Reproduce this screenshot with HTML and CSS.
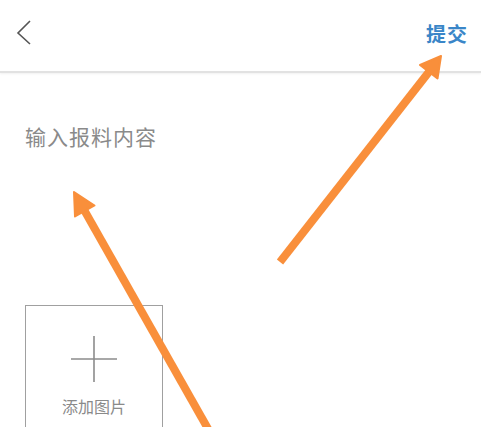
FILE: index.html
```html
<!DOCTYPE html>
<html lang="zh-CN">
<head>
<meta charset="utf-8">
<title>报料</title>
<link rel="stylesheet" href="styles.css">
</head>
<body>
<div class="page">
  <header class="topbar">
    <button class="back" aria-label="返回">
      <svg width="16" height="26" viewBox="0 0 16 26"><polyline points="14,1 2,13 14,24" fill="none" stroke="#555" stroke-width="1.6"/></svg>
    </button>
    <button class="submit">提交</button>
  </header>
  <main class="content">
    <div class="input-area">输入报料内容</div>
    <div class="upload">
      <svg class="plus" width="46" height="46" viewBox="0 0 46 46"><path d="M23 0V46M0 23H46" stroke="#8c8c8c" stroke-width="1.6" fill="none"/></svg>
      <span class="upload-label">添加图片</span>
    </div>
  </main>
  <svg class="annot" width="481" height="427" viewBox="0 0 481 427">
    <line x1="280" y1="262" x2="432" y2="68" stroke="#f98f3b" stroke-width="8"/>
    <polygon points="441,56 420,65 437.5,78.5" fill="#f98f3b" stroke="#f98f3b" stroke-width="2" stroke-linejoin="round"/>
    <line x1="220" y1="450" x2="83" y2="208" stroke="#f98f3b" stroke-width="8"/>
    <polygon points="74,192 94.5,205.5 75,216.5" fill="#f98f3b" stroke="#f98f3b" stroke-width="2" stroke-linejoin="round"/>
  </svg>
</div>
</body>
</html>
```
FILE: styles.css
```css
html, body {
  margin: 0;
  padding: 0;
  background: #fff;
}
body {
  font-family: "Noto Sans CJK SC", "Noto Sans", sans-serif;
}
.page {
  position: relative;
  width: 481px;
  height: 427px;
  overflow: hidden;
}
.topbar {
  height: 71px;
  display: flex;
  align-items: center;
  justify-content: space-between;
  border-bottom: 2px solid #e2e2e2;
  box-shadow: 0 1px 2px rgba(0,0,0,0.06);
  box-sizing: border-box;
  height: 73px;
}
.back {
  border: 0;
  background: none;
  padding: 0 0 5px 16px;
  display: flex;
  align-items: center;
}
.submit {
  border: 0;
  background: none;
  padding: 0 13px 5px 0;
  font-family: "Noto Sans CJK SC", sans-serif;
  font-size: 20px;
  font-weight: 700;
  color: #3a86c8;
  letter-spacing: 1px;
}
.content {
  padding: 48px 25px 0;
}
.input-area {
  font-size: 21px;
  line-height: 31px;
  color: #8a8a8a;
  letter-spacing: 1px;
}
.upload {
  margin-top: 153px;
  width: 138px;
  height: 138px;
  box-sizing: border-box;
  border: 1px solid #a0a0a0;
  display: flex;
  flex-direction: column;
  align-items: center;
  padding-top: 30px;
}
.plus {
  display: block;
}
.upload-label {
  margin-top: 13px;
  font-size: 16px;
  line-height: 22px;
  color: #8a8a8a;
}
.annot {
  position: absolute;
  left: 0;
  top: 0;
  pointer-events: none;
}
```
